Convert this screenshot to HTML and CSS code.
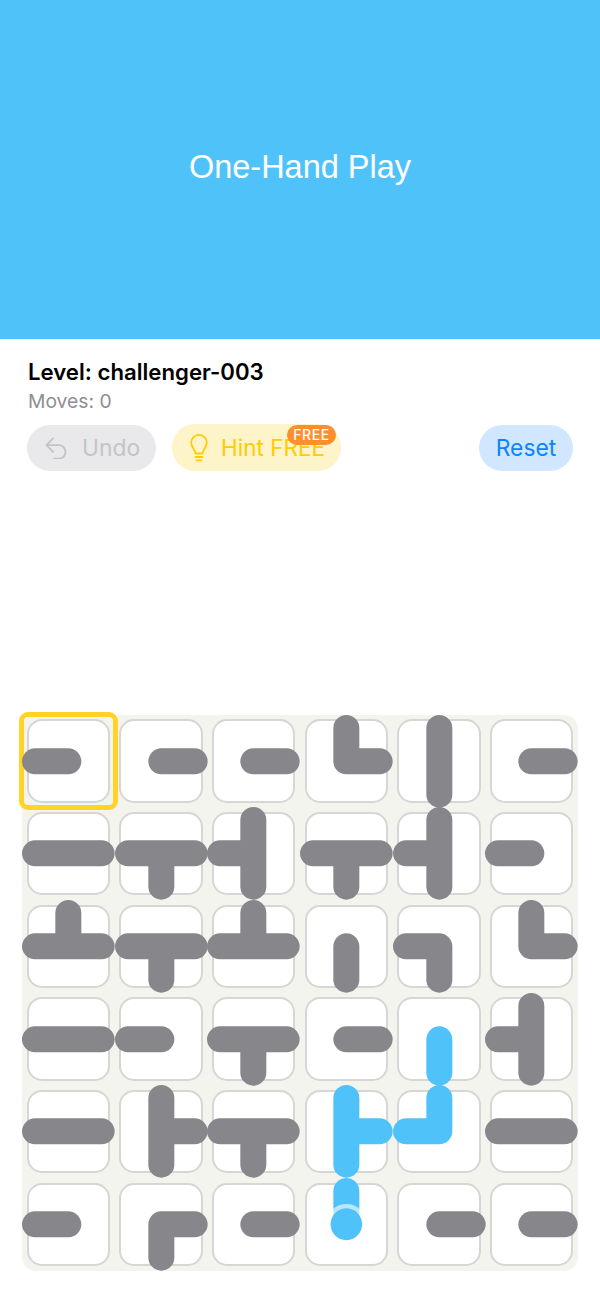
FILE: index.html
```html
<!DOCTYPE html>
<html lang="en">
<head>
<meta charset="utf-8">
<title>One-Hand Play</title>
<link rel="stylesheet" href="styles.css">
</head>
<body>
<div class="page">
  <header class="banner">One-Hand Play</header>
  <section class="info">
    <h1 class="level">Level: challenger-003</h1>
    <p class="moves">Moves: 0</p>
    <div class="actions">
      <button class="btn undo">
        <svg class="undo-icon" viewBox="0 0 24 24"><path d="M8.500 2.500 1.500 9.500l7 7M1.500 9.500H15a7.200 7.200 0 0 1 0 14.300H9.500"/></svg>
        <span>Undo</span>
      </button>
      <button class="btn hint">
        <svg class="bulb-icon" viewBox="0 0 18 28"><path d="M5.500 19.500c0-3.500-4.300-6-4.300-10.800a7.800 7.800 0 0 1 15.600 0c0 4.800-4.300 7.300-4.300 10.800zM5.600 23h6.800M6.600 26.300h4.800"/></svg>
        <span>Hint FREE</span>
        <span class="badge">FREE</span>
      </button>
      <button class="btn reset">Reset</button>
    </div>
  </section>
  <section class="board">
    <div class="tile"><div class="frame"></div><div class="cell"></div><svg class="pipes" viewBox="-46.335 -46.335 92.67 92.67"><path d="M0 0H-33.33"/></svg></div>
    <div class="tile"><div class="cell"></div><svg class="pipes" viewBox="-46.335 -46.335 92.67 92.67"><path d="M0 0H33.33"/></svg></div>
    <div class="tile"><div class="cell"></div><svg class="pipes" viewBox="-46.335 -46.335 92.67 92.67"><path d="M0 0H33.33"/></svg></div>
    <div class="tile"><div class="cell"></div><svg class="pipes" viewBox="-46.335 -46.335 92.67 92.67"><path d="M0 0V-33.33M0 0H33.33"/></svg></div>
    <div class="tile"><div class="cell"></div><svg class="pipes" viewBox="-46.335 -46.335 92.67 92.67"><path d="M0 0V-33.33M0 0V33.33"/></svg></div>
    <div class="tile"><div class="cell"></div><svg class="pipes" viewBox="-46.335 -46.335 92.67 92.67"><path d="M0 0H33.33"/></svg></div>

    <div class="tile"><div class="cell"></div><svg class="pipes" viewBox="-46.335 -46.335 92.67 92.67"><path d="M0 0H-33.33M0 0H33.33"/></svg></div>
    <div class="tile"><div class="cell"></div><svg class="pipes" viewBox="-46.335 -46.335 92.67 92.67"><path d="M0 0H-33.33M0 0H33.33M0 0V33.33"/></svg></div>
    <div class="tile"><div class="cell"></div><svg class="pipes" viewBox="-46.335 -46.335 92.67 92.67"><path d="M0 0H-33.33M0 0V-33.33M0 0V33.33"/></svg></div>
    <div class="tile"><div class="cell"></div><svg class="pipes" viewBox="-46.335 -46.335 92.67 92.67"><path d="M0 0H-33.33M0 0H33.33M0 0V33.33"/></svg></div>
    <div class="tile"><div class="cell"></div><svg class="pipes" viewBox="-46.335 -46.335 92.67 92.67"><path d="M0 0H-33.33M0 0V-33.33M0 0V33.33"/></svg></div>
    <div class="tile"><div class="cell"></div><svg class="pipes" viewBox="-46.335 -46.335 92.67 92.67"><path d="M0 0H-33.33"/></svg></div>

    <div class="tile"><div class="cell"></div><svg class="pipes" viewBox="-46.335 -46.335 92.67 92.67"><path d="M0 0H-33.33M0 0H33.33M0 0V-33.33"/></svg></div>
    <div class="tile"><div class="cell"></div><svg class="pipes" viewBox="-46.335 -46.335 92.67 92.67"><path d="M0 0H-33.33M0 0H33.33M0 0V33.33"/></svg></div>
    <div class="tile"><div class="cell"></div><svg class="pipes" viewBox="-46.335 -46.335 92.67 92.67"><path d="M0 0H-33.33M0 0H33.33M0 0V-33.33"/></svg></div>
    <div class="tile"><div class="cell"></div><svg class="pipes" viewBox="-46.335 -46.335 92.67 92.67"><path d="M0 0V33.33"/></svg></div>
    <div class="tile"><div class="cell"></div><svg class="pipes" viewBox="-46.335 -46.335 92.67 92.67"><path d="M0 0H-33.33M0 0V33.33"/></svg></div>
    <div class="tile"><div class="cell"></div><svg class="pipes" viewBox="-46.335 -46.335 92.67 92.67"><path d="M0 0V-33.33M0 0H33.33"/></svg></div>

    <div class="tile"><div class="cell"></div><svg class="pipes" viewBox="-46.335 -46.335 92.67 92.67"><path d="M0 0H-33.33M0 0H33.33"/></svg></div>
    <div class="tile"><div class="cell"></div><svg class="pipes" viewBox="-46.335 -46.335 92.67 92.67"><path d="M0 0H-33.33"/></svg></div>
    <div class="tile"><div class="cell"></div><svg class="pipes" viewBox="-46.335 -46.335 92.67 92.67"><path d="M0 0H-33.33M0 0H33.33M0 0V33.33"/></svg></div>
    <div class="tile"><div class="cell"></div><svg class="pipes" viewBox="-46.335 -46.335 92.67 92.67"><path d="M0 0H33.33"/></svg></div>
    <div class="tile"><div class="cell"></div><svg class="pipes lit" viewBox="-46.335 -46.335 92.67 92.67"><path d="M0 0V33.33"/></svg></div>
    <div class="tile"><div class="cell"></div><svg class="pipes" viewBox="-46.335 -46.335 92.67 92.67"><path d="M0 0H-33.33M0 0V-33.33M0 0V33.33"/></svg></div>

    <div class="tile"><div class="cell"></div><svg class="pipes" viewBox="-46.335 -46.335 92.67 92.67"><path d="M0 0H-33.33M0 0H33.33"/></svg></div>
    <div class="tile"><div class="cell"></div><svg class="pipes" viewBox="-46.335 -46.335 92.67 92.67"><path d="M0 0V-33.33M0 0V33.33M0 0H33.33"/></svg></div>
    <div class="tile"><div class="cell"></div><svg class="pipes" viewBox="-46.335 -46.335 92.67 92.67"><path d="M0 0H-33.33M0 0H33.33M0 0V33.33"/></svg></div>
    <div class="tile"><div class="cell"></div><svg class="pipes lit" viewBox="-46.335 -46.335 92.67 92.67"><path d="M0 0V-33.33M0 0V33.33M0 0H33.33"/></svg></div>
    <div class="tile"><div class="cell"></div><svg class="pipes lit" viewBox="-46.335 -46.335 92.67 92.67"><path d="M0 0V-33.33M0 0H-33.33"/></svg></div>
    <div class="tile"><div class="cell"></div><svg class="pipes" viewBox="-46.335 -46.335 92.67 92.67"><path d="M0 0H-33.33M0 0H33.33"/></svg></div>

    <div class="tile"><div class="cell"></div><svg class="pipes" viewBox="-46.335 -46.335 92.67 92.67"><path d="M0 0H-33.33"/></svg></div>
    <div class="tile"><div class="cell"></div><svg class="pipes" viewBox="-46.335 -46.335 92.67 92.67"><path d="M0 0H33.33M0 0V33.33"/></svg></div>
    <div class="tile"><div class="cell"></div><svg class="pipes" viewBox="-46.335 -46.335 92.67 92.67"><path d="M0 0H33.33"/></svg></div>
    <div class="tile"><div class="cell"></div><svg class="pipes lit" viewBox="-46.335 -46.335 92.67 92.67"><path d="M0 0V-33.33"/><circle class="halo" r="18"/><circle class="source" r="15.8"/></svg></div>
    <div class="tile"><div class="cell"></div><svg class="pipes" viewBox="-46.335 -46.335 92.67 92.67"><path d="M0 0H33.33"/></svg></div>
    <div class="tile"><div class="cell"></div><svg class="pipes" viewBox="-46.335 -46.335 92.67 92.67"><path d="M0 0H33.33"/></svg></div>
  </section>
</div>
</body>
</html>
```

FILE: styles.css
```css
* { box-sizing: border-box; }

html, body { margin: 0; padding: 0; background: #fff; }

.page {
  display: flex;
  flex-direction: column;
  height: 1304px;
  font-family: Inter, "Liberation Sans", sans-serif;
}

.banner {
  flex: none;
  height: 339px;
  padding-bottom: 4px;
  display: flex;
  align-items: center;
  justify-content: center;
  background: #4fc3f9;
  color: #fff;
  font-family: "Liberation Sans", Arial, sans-serif;
  font-size: 32.5px;
}

.info { padding: 18px 27px 0 28px; }

.level {
  margin: 0;
  font-size: 22.2px;
  line-height: 30px;
  font-weight: 600;
  color: #000;
}

.moves {
  margin: 1px 0 0;
  font-size: 19.3px;
  line-height: 26px;
  color: #8e8e93;
}

.actions {
  display: flex;
  align-items: center;
  gap: 16px;
  margin: 10px 0 0 -1px;
}

.btn {
  position: relative;
  display: flex;
  align-items: center;
  height: 46px;
  border: 0;
  border-radius: 23px;
  padding: 0;
  font-family: inherit;
  font-size: 22.8px;
}

.undo {
  width: 129px;
  padding-left: 18px;
  gap: 14px;
  background: #e9e9eb;
  color: #c4c4c6;
}

.undo-icon {
  width: 23px;
  height: 23px;
  fill: none;
  stroke: #c4c4c6;
  stroke-width: 2;
  stroke-linecap: round;
  stroke-linejoin: round;
}

.hint {
  width: 169px;
  height: 47px;
  padding-left: 18px;
  gap: 13px;
  background: #fef4c9;
  color: #ffcc00;
  font-size: 22.5px;
}

.bulb-icon {
  width: 18px;
  height: 28px;
  fill: none;
  stroke: #ffcc00;
  stroke-width: 1.8;
  stroke-linecap: round;
  stroke-linejoin: round;
}

.badge {
  position: absolute;
  top: 1px;
  right: 5px;
  width: 49px;
  height: 20px;
  border-radius: 10px;
  background: #ff8f2e;
  color: #fff;
  font-size: 14px;
  line-height: 20px;
  font-weight: 500;
  letter-spacing: 0.6px;
  text-align: center;
}

.reset {
  width: 94px;
  margin-left: auto;
  justify-content: center;
  background: #d1e7ff;
  color: #0a84ff;
}

.board {
  flex: none;
  display: grid;
  grid-template-columns: repeat(6, 1fr);
  grid-auto-rows: 92.67px;
  width: 556px;
  margin: auto 0 33.5px 22px;
  background: #f4f4ef;
  border-radius: 14px;
}

.tile { position: relative; padding: 4.67px; }

.cell {
  height: 100%;
  background: #fff;
  border: 2px solid #d6d6d4;
  border-radius: 15px;
}

.pipes {
  position: absolute;
  inset: 0;
  width: 100%;
  height: 100%;
  overflow: visible;
  fill: none;
  stroke: #86868b;
  stroke-width: 26;
  stroke-linecap: round;
  z-index: 1;
}

.lit { stroke: #4fc3f9; }

.halo { stroke: rgba(255, 255, 255, 0.6); stroke-width: 4.5; }

.source { fill: #4fc3f9; stroke: none; }

.frame {
  position: absolute;
  top: -3px;
  left: -3px;
  width: 98.5px;
  height: 98.5px;
  border: 5px solid #ffd426;
  border-radius: 9px;
}
```
